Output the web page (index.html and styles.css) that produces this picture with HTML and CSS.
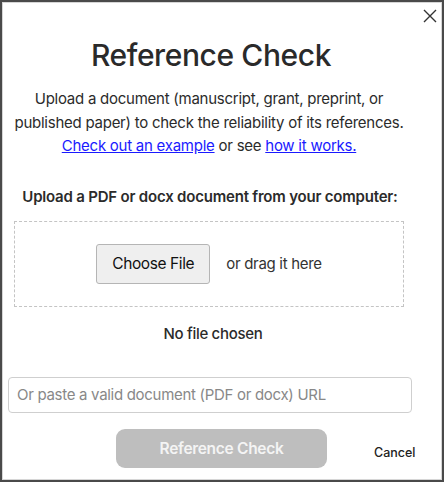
FILE: index.html
```html
<!DOCTYPE html>
<html lang="en">
<head>
    <meta charset="UTF-8">
    <title>Reference Check</title>
    <link rel="stylesheet" href="styles.css">
</head>
<body>
    <div class="modal">
        <button class="close" aria-label="Close">
            <svg width="14" height="14" viewBox="0 0 14 14">
                <path d="M1 1 L13 13 M13 1 L1 13" stroke="#333" stroke-width="1.4" fill="none"/>
            </svg>
        </button>

        <h1>Reference Check</h1>
        <p class="intro">
            Upload a document (manuscript, grant, preprint, or<br>
            published paper) to check the reliability of its references.<br>
            <a href="#">Check out an example</a> or see <a href="#">how it works.</a>
        </p>

        <div class="upload-label">Upload a PDF or docx document from your computer:</div>
        <div class="dropzone">
            <button class="choose">Choose File</button>
            <span class="drag">or drag it here</span>
        </div>
        <div class="chosen">No file chosen</div>

        <input class="url" type="text" placeholder="Or paste a valid document (PDF or docx) URL">

        <div class="actions">
            <button class="submit" disabled>Reference Check</button>
            <a class="cancel" href="#">Cancel</a>
        </div>
    </div>
</body>
</html>
```

FILE: styles.css
```css
html, body {
    margin: 0;
    padding: 0;
    background: #fff;
}

body {
    font-family: 'Inter', 'Liberation Sans', sans-serif;
    color: #2b2b2b;
}

/* Dialog frame */
.modal {
    position: relative;
    box-sizing: border-box;
    width: 444px;
    height: 482px;
    border: 2px solid #4a4a4a;
    box-shadow: inset 0 0 0 1px #d6d6d6;
    padding: 0 32px 0 6px;
    display: flex;
    flex-direction: column;
    align-items: center;
}

.close {
    position: absolute;
    top: 7px;
    right: 5px;
    border: none;
    background: none;
    padding: 0;
    cursor: pointer;
}

h1 {
    font-size: 30px;
    font-weight: 500;
    letter-spacing: -0.4px;
    margin: 35px 0 0;
    padding-left: 4px;
    line-height: 36px;
    color: #2a2a2a;
}

.intro {
    margin: 14px 0 0;
    padding-left: 0;
    font-size: 15px;
    line-height: 23.5px;
    text-align: center;
    white-space: nowrap;
    letter-spacing: -0.25px;
}

.intro a {
    color: #1a1aff;
    text-decoration: underline;
}

.upload-label {
    margin-top: 29px;
    padding-left: 2px;
    font-size: 15px;
    font-weight: 600;
    letter-spacing: -0.2px;
    white-space: nowrap;
}

.dropzone {
    box-sizing: border-box;
    width: 390px;
    height: 86px;
    margin-top: 15px;
    border: 1px dashed #c4c4c4;
    display: flex;
    align-items: center;
    justify-content: center;
    gap: 16px;
}

.choose {
    box-sizing: border-box;
    width: 114px;
    height: 40px;
    font-family: inherit;
    font-size: 15.5px;
    letter-spacing: -0.4px;
    color: #111;
    background: #efefef;
    border: 1px solid #b5b5b5;
    border-radius: 3px;
}

.drag {
    font-size: 15px;
    letter-spacing: -0.3px;
    color: #333;
}

.chosen {
    margin-top: 17px;
    padding-left: 8px;
    font-size: 15px;
    font-weight: 500;
    letter-spacing: -0.3px;
}

.url {
    box-sizing: border-box;
    align-self: flex-start;
    width: 404px;
    height: 36px;
    margin-top: 34px;
    padding: 0 8px;
    font-family: inherit;
    font-size: 15px;
    letter-spacing: -0.3px;
    border: 1px solid #cfcfcf;
    border-radius: 4px;
    color: #333;
}

.url::placeholder {
    color: #888;
}

.actions {
    align-self: stretch;
    display: flex;
    align-items: center;
    margin-top: 16px;
    margin-right: -20px;
}

.submit {
    flex-shrink: 0;
    box-sizing: border-box;
    width: 211px;
    height: 39px;
    margin-left: 108px;
    border: none;
    border-radius: 9px;
    background: #bebebe;
    color: #f4f4f4;
    font-family: inherit;
    font-size: 15.5px;
    font-weight: 600;
    letter-spacing: -0.3px;
}

.cancel {
    flex-shrink: 0;
    margin-left: 47px;
    margin-top: 8px;
    font-size: 12.5px;
    font-weight: 500;
    color: #222;
    text-decoration: none;
}
```
